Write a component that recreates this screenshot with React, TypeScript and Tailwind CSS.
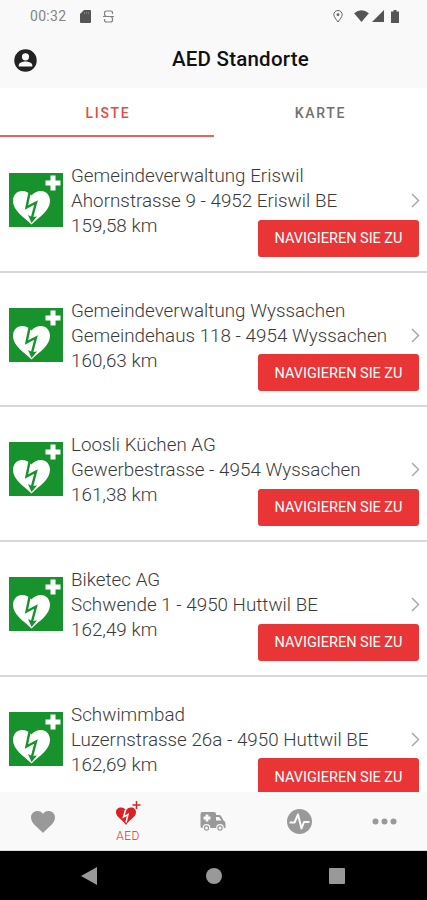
import React from "react";

const locations = [
  {
    name: "Gemeindeverwaltung Eriswil",
    address: "Ahornstrasse 9 - 4952 Eriswil BE",
    distance: "159,58 km",
  },
  {
    name: "Gemeindeverwaltung Wyssachen",
    address: "Gemeindehaus 118 - 4954 Wyssachen",
    distance: "160,63 km",
  },
  {
    name: "Loosli Küchen AG",
    address: "Gewerbestrasse - 4954 Wyssachen",
    distance: "161,38 km",
  },
  {
    name: "Biketec AG",
    address: "Schwende 1 - 4950 Huttwil BE",
    distance: "162,49 km",
  },
  {
    name: "Schwimmbad",
    address: "Luzernstrasse 26a - 4950 Huttwil BE",
    distance: "162,69 km",
  },
];

const StatusBar = () => {
  return (
    <div className="flex h-8 items-center justify-between pl-[30px] pr-[28px] text-[#666]">
      <div className="flex items-center">
        <span className="w-[37px] whitespace-nowrap text-[14px] leading-4 tracking-[0.3px] text-[#858585]">
          00:32
        </span>
        <svg className="ml-[13px]" width="11" height="13" viewBox="0 0 11 13">
          <path d="M4 0h6q1 0 1 1v11q0 1-1 1H1q-1 0-1-1V4z" fill="#555" />
          <path d="M4.5 2v2M6.5 2v2M8.5 2v2" stroke="#888" strokeWidth="0.8" />
        </svg>
        <svg
          className="ml-3"
          width="11"
          height="13"
          viewBox="0 0 11 13"
          fill="none"
          stroke="#808080"
          strokeWidth="1.2"
        >
          <path d="M9.500 4V3Q9.500 1 7.500 1H3.500Q1.500 1 1.500 3V4Q1.500 6.500 4 6.500H7Q9.500 6.500 9.500 9V10Q9.500 12 7.500 12H3.500Q1.500 12 1.500 10V9M0 6.500H11" />
        </svg>
      </div>
      <div className="flex items-center">
        <svg
          width="10"
          height="13"
          viewBox="0 0 10 13"
          fill="none"
          stroke="#666"
        >
          <path d="M5 12C3 9 .8 7 .8 4.700a4.200 4.200 0 0 1 8.400 0C9.200 7 7 9 5 12z" />
          <circle cx="5" cy="4.700" r="1.400" fill="#666" stroke="none" />
        </svg>
        <svg
          className="ml-[11px]"
          width="15"
          height="12"
          viewBox="0 0 16 13"
          fill="#555"
        >
          <path d="M0 3.500Q8-2.700 16 3.500L8 13z" />
        </svg>
        <svg
          className="ml-[3px]"
          width="12"
          height="12"
          viewBox="0 0 12 12"
          fill="#555"
        >
          <path d="M12 0v12H0z" />
        </svg>
        <svg
          className="ml-[7px]"
          width="8"
          height="13"
          viewBox="0 0 8 13"
          fill="#555"
        >
          <path d="M2.500 0h3v1.500H8V13H0V1.500h2.500z" />
        </svg>
      </div>
    </div>
  );
};

const Header = () => {
  return (
    <header className="h-[88px] bg-[#f9f9f9]">
      <StatusBar />
      <div className="flex h-14 items-center pl-[14px]">
        <svg width="23" height="23" viewBox="0 0 23 23" fill="none">
          <circle cx="11.500" cy="11.500" r="11.200" fill="#222" />
          <circle cx="11.500" cy="7.800" r="3.600" fill="#f9f9f9" />
          <path
            d="M4.700 16.400c0-3 4-4 6.800-4s6.800 1 6.800 4v1H4.700z"
            fill="#f9f9f9"
          />
        </svg>
        <h1 className="pb-px pl-[135px] text-[20.500px] font-medium tracking-[0.220px] whitespace-nowrap text-[#111]">
          AED Standorte
        </h1>
      </div>
    </header>
  );
};

const Tabs = () => {
  return (
    <div className="flex h-[49px] text-[14px] font-medium tracking-[1.680px]">
      <div className="flex w-[214px] items-center justify-center border-b-2 border-[#ee605d] pt-1 pl-0.5 text-[#e54b48]">
        LISTE
      </div>
      <div className="flex flex-1 items-center justify-center pt-0.5 text-[#707070]">
        KARTE
      </div>
    </div>
  );
};

const AedSign = () => {
  return (
    <svg
      className="mt-[35px] ml-[9px] shrink-0"
      width="54"
      height="54"
      viewBox="0 0 54 54"
    >
      <path d="M0 0h54v54H0z" fill="#17922c" />
      <path
        d="M22.500 51.500C15 44 4 38 4 28c0-6 4-10 9-10 4 0 7 1.500 9.500 4.500 2.500-3 5.500-4.500 9.500-4.500 5 0 9 4 9 10 0 10-11 16-18.500 23.500z"
        fill="#fff"
      />
      <path d="M41.500 2.500h5v5h5v5h-5v5h-5v-5h-5v-5h5z" fill="#fff" />
      <path
        d="M20.500 20l-3 14.500 9.500-5-4 15"
        fill="none"
        stroke="#17922c"
        strokeWidth="2.400"
      />
      <path d="M19 42l3.500 8 5.500-6.500-5 .5z" fill="#17922c" />
    </svg>
  );
};

const LocationItem = ({ name, address, distance }: any) => {
  return (
    <div className="flex h-[134.700px] shrink-0 border-b-2 border-[#d8d8d8]">
      <AedSign />
      <div className="ml-2 min-w-0 flex-1 pt-[26px] pr-2 text-[18.800px] leading-[25px] font-light tracking-[0.020px] whitespace-nowrap text-[#3a3a3a]">
        <p>{name}</p>
        <div className="flex items-center justify-between">
          <p>{address}</p>
          <svg
            className="-mr-px mb-0.5"
            width="9"
            height="15"
            viewBox="0 0 9 15"
            fill="none"
            stroke="#aaa"
            strokeWidth="1.500"
          >
            <path d="M1 1l6.500 6.500L1 14" />
          </svg>
        </div>
        <div className="flex items-start justify-between">
          <p>{distance}</p>
          <button className="mt-[5.500px] h-[37px] w-[161px] rounded-[3px] bg-[#e93535] pt-px text-[14.500px] font-normal tracking-[-0.020px] text-white">
            NAVIGIEREN SIE ZU
          </button>
        </div>
      </div>
    </div>
  );
};

const BottomTabs = () => {
  return (
    <nav className="grid h-[59px] shrink-0 grid-cols-5 border-b border-[#ddd] bg-[#f9f9f9] text-[#999]">
      <div className="flex items-center justify-center pt-0.5">
        <svg width="24" height="22" viewBox="0 0 24 22" fill="currentColor">
          <path d="M12 22C8 17 0 13 0 6.500 0 2.500 3 0 6.500 0 9 0 11 1.200 12 3c1-1.800 3-3 5.500-3C21 0 24 2.500 24 6.500 24 13 16 17 12 22z" />
        </svg>
      </div>
      <div className="flex flex-col items-center pt-2 text-[#e12c2f]">
        <svg width="26" height="26" viewBox="0 0 26 26">
          <path
            d="M11 25C8 20 1 17 1 12.500 1 9 3 7.500 6 7.500c2.300 0 4 1 5 3 1-2 2.700-3 5-3 3 0 5 1.500 5 5C21 17 14 20 11 25z"
            fill="#dc2025"
          />
          <path
            d="M10.500 10l-2 7 4.500-2.500-2 8"
            fill="none"
            stroke="#fff"
            strokeWidth="1.500"
          />
          <path
            d="M21.500 1v8M17.500 5h8"
            fill="none"
            stroke="#dc2025"
            strokeWidth="1.500"
          />
        </svg>
        <span className="mt-[3px] text-[12px] leading-[14px] font-light tracking-[0.500px]">
          AED
        </span>
      </div>
      <div className="flex items-center justify-center pt-0.5">
        <svg width="26" height="20" viewBox="0 0 26 20" fill="currentColor">
          <path d="M2.500 0H14q2 0 2 2v1h3q1.500 0 2.200 1.200L23.500 8.500q2 1 2 3v4.500H2q-1.500 0-1.500-2V2q0-2 2-2z" />
          <g stroke="#f9f9f9" strokeWidth="1.200">
            <circle cx="6.500" cy="16" r="3.300" />
            <circle cx="20" cy="16" r="3.300" />
          </g>
          <circle cx="6.500" cy="16" r="1.500" fill="#f9f9f9" />
          <circle cx="20" cy="16" r="1.500" fill="#f9f9f9" />
          <path d="M7 2.500v7M3.500 6h7" stroke="#f9f9f9" strokeWidth="2.800" />
          <path d="M16 5h3l2.500 3.500H16z" fill="#f9f9f9" />
        </svg>
      </div>
      <div className="flex items-center justify-center pt-px pl-0.5">
        <svg width="25" height="25" viewBox="0 0 25 25" fill="none">
          <circle cx="12.500" cy="12.500" r="12.500" fill="currentColor" />
          <path
            d="M2.500 13.500h5L11 5.500l3.500 14 2.500-6.500h5.500"
            stroke="#f9f9f9"
            strokeWidth="2"
            strokeLinejoin="round"
          />
        </svg>
      </div>
      <div className="flex items-center justify-center pt-px pl-px">
        <svg width="25" height="7" viewBox="0 0 25 7" fill="currentColor">
          <circle cx="3.500" cy="3.500" r="3" />
          <circle cx="12.500" cy="3.500" r="3" />
          <circle cx="21.500" cy="3.500" r="3" />
        </svg>
      </div>
    </nav>
  );
};

const AndroidNav = () => {
  return (
    <div className="flex h-[49px] shrink-0 items-center justify-between bg-black pr-[82px] pl-[81px] text-[#999]">
      <svg width="16" height="18" viewBox="0 0 16 18" fill="currentColor">
        <path d="M16 0v18L0 9z" />
      </svg>
      <div className="ml-0.5 h-4 w-4 rounded-full bg-[#999]"></div>
      <div className="h-4 w-4 rounded-[1px] bg-[#999]"></div>
    </div>
  );
};

const App = () => {
  return (
    <div className="flex h-[900px] w-[427px] flex-col overflow-hidden bg-white font-[Roboto,sans-serif]">
      <Header />
      <Tabs />
      <main className="flex min-h-0 flex-1 flex-col overflow-hidden pt-px">
        {locations.map((location, index) => {
          return <LocationItem key={"location_" + index} {...location} />;
        })}
      </main>
      <BottomTabs />
      <AndroidNav />
    </div>
  );
};

export default App;
